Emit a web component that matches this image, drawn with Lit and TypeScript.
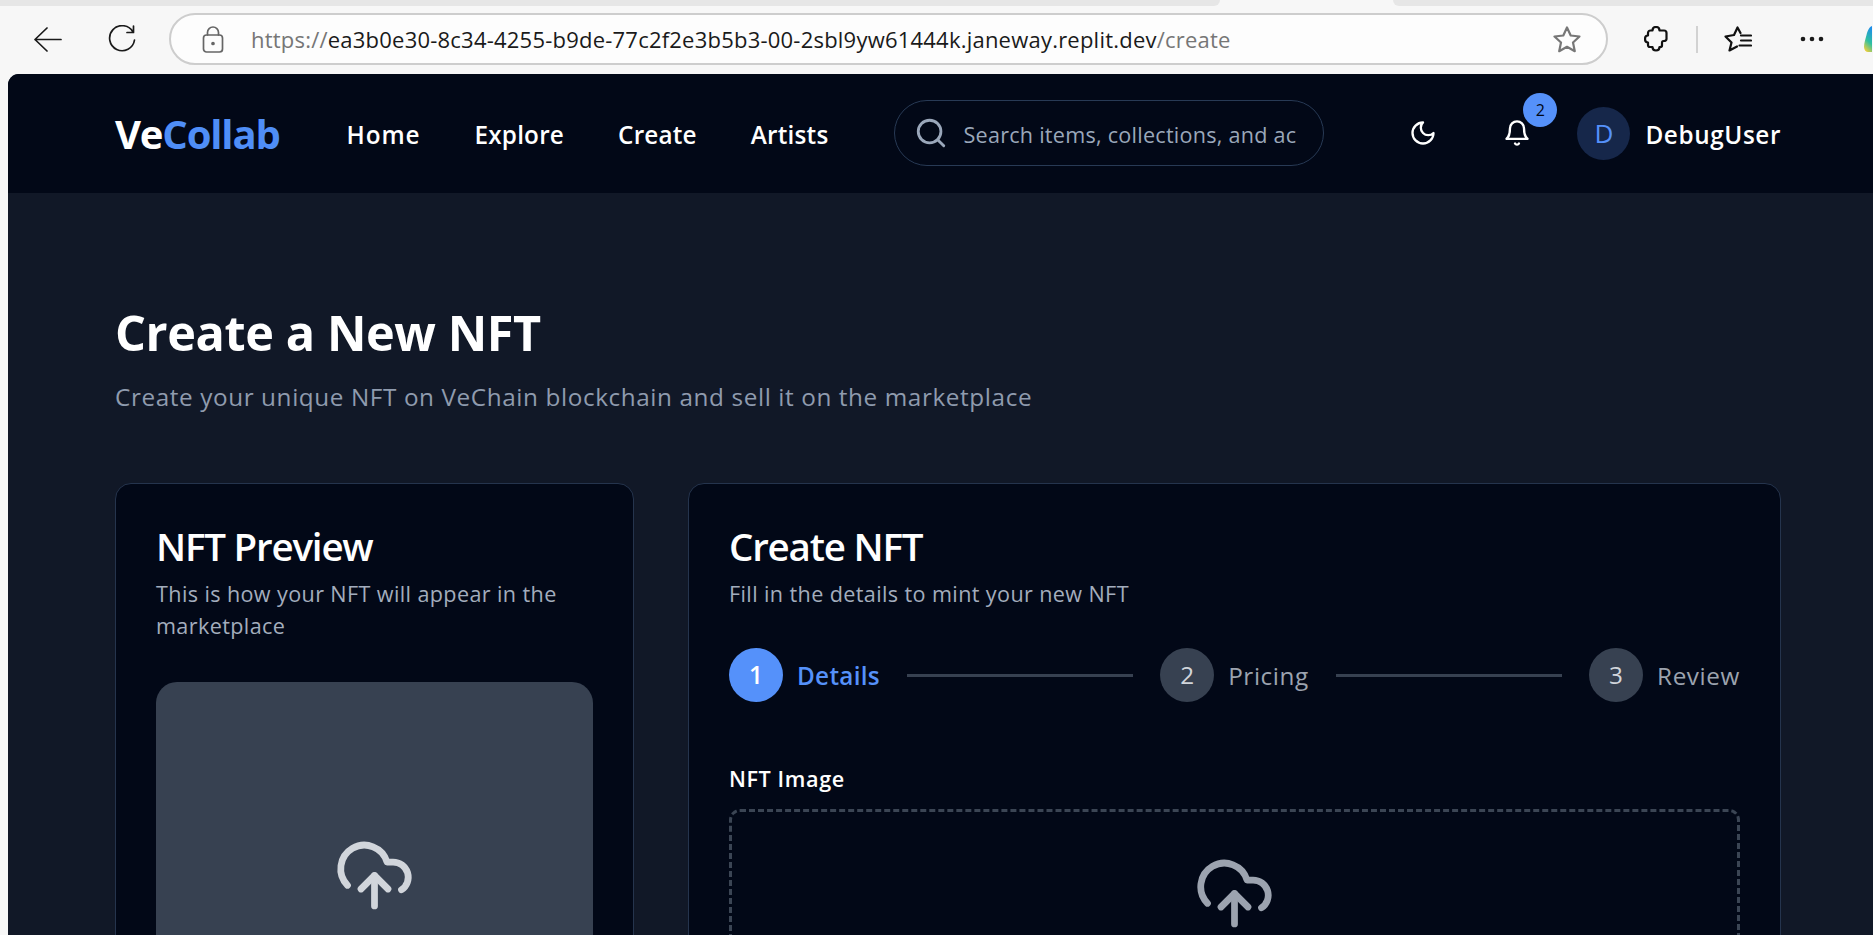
import { LitElement, css, html, svg } from "lit";
import { customElement } from "lit/decorators.js";

const cloudIcon = svg`
  <path d="M4 14.899A7 7 0 1 1 15.71 8h1.79a4.5 4.5 0 0 1 2.5 8.242" />
  <path d="M12 12v9" />
  <path d="m16 16-4-4-4 4" />
`;

@customElement("app-root")
export class AppRoot extends LitElement {
  static styles = css`
    :host {
      display: block;
      width: 1873px;
      height: 935px;
      overflow: hidden;
      background: #f7f7f7;
      font-family: "Open Sans", "Noto Sans", sans-serif;
    }

    svg {
      display: block;
      flex: none;
    }

    .tabs {
      display: flex;
      height: 6px;
    }

    .tab-left,
    .tab-right {
      background: #e6e6e6;
    }

    .tab-left {
      width: 1220px;
      border-bottom-right-radius: 6px;
    }

    .tab-right {
      flex: 1;
      margin-left: 173px;
      border-bottom-left-radius: 6px;
    }

    .toolbar {
      display: flex;
      align-items: center;
      height: 66px;
      padding: 0 0 2px 34px;
    }

    .thin {
      fill: none;
      stroke: #1a1a1a;
      stroke-width: 1.7;
      stroke-linecap: round;
      stroke-linejoin: round;
    }

    .bold {
      fill: none;
      stroke: #111;
      stroke-width: 2.2;
      stroke-linecap: round;
      stroke-linejoin: round;
    }

    .refresh {
      margin-left: 46px;
    }

    .pill {
      display: flex;
      flex: none;
      align-items: center;
      box-sizing: border-box;
      width: 1439px;
      height: 52px;
      margin-left: 33px;
      padding: 0 25px 0 31px;
      background: #fdfdfd;
      border: 2px solid #cdcdcd;
      border-radius: 26px;
    }

    .url {
      flex: 1;
      margin-left: 27px;
      font-size: 22px;
      letter-spacing: 0.22px;
      line-height: 30px;
      white-space: nowrap;
      color: #1a1a1a;
    }

    .url span {
      color: #767676;
    }

    .gray {
      stroke: #777;
    }

    .lock {
      stroke: #666;
    }

    .puzzle {
      margin-left: 36px;
    }

    .sep {
      flex: none;
      width: 2px;
      height: 27px;
      margin-left: 28px;
      background: #d2d2d2;
    }

    .fav {
      margin-left: 26px;
    }

    .dots {
      margin-left: 48px;
    }

    .copilot {
      margin-left: 40px;
    }

    .page {
      height: 861px;
      margin-left: 8px;
      overflow: hidden;
      background: #111827;
      border-top-left-radius: 11px;
      color: #fff;
    }

    .top {
      display: flex;
      align-items: center;
      box-sizing: border-box;
      height: 120px;
      padding: 0 92px 1px 107px;
      background: #020817;
      border-bottom: 1px solid #111827;
    }

    .logo {
      padding-top: 2px;
      font-size: 40px;
      font-weight: 700;
      letter-spacing: -1.15px;
      line-height: 54px;
      color: #fff;
    }

    .logo span {
      color: #4f8ef7;
    }

    nav {
      display: flex;
      gap: 54px;
      margin-left: 67px;
      padding-top: 2px;
      font-size: 24.3px;
      font-weight: 600;
      letter-spacing: 0.2px;
    }

    nav span:first-child {
      letter-spacing: 0.9px;
    }

    .search {
      display: flex;
      flex: none;
      align-items: center;
      box-sizing: border-box;
      width: 430px;
      height: 66px;
      margin-left: 66px;
      padding-left: 19px;
      border: 1px solid #283a55;
      border-radius: 33px;
      color: #9aa7ba;
    }

    .search svg,
    .moon svg,
    .bell svg {
      fill: none;
      stroke: currentColor;
      stroke-width: 2;
      stroke-linecap: round;
      stroke-linejoin: round;
    }

    .search span {
      margin-left: 15px;
      padding-top: 2px;
      font-size: 21.6px;
      letter-spacing: 0.25px;
      white-space: nowrap;
    }

    .moon {
      margin-left: auto;
    }

    .bell {
      position: relative;
      margin-left: 66px;
    }

    .badge {
      position: absolute;
      top: -26px;
      left: 20px;
      width: 34px;
      height: 34px;
      border-radius: 50%;
      background: #5591fa;
      color: #020817;
      font-size: 16px;
      line-height: 34px;
      text-align: center;
    }

    .avatar {
      flex: none;
      width: 53px;
      height: 53px;
      margin-left: 46px;
      border-radius: 50%;
      background: #16274a;
      color: #5591fa;
      font-size: 26px;
      font-weight: 500;
      line-height: 53px;
      text-align: center;
    }

    .name {
      margin-left: 15px;
      padding-top: 2px;
      font-size: 24.3px;
      font-weight: 600;
      letter-spacing: 0.6px;
    }

    main {
      padding: 108px 92px 0 107px;
    }

    h1 {
      margin: 0;
      font-size: 48.6px;
      font-weight: 700;
      letter-spacing: -0.4px;
      line-height: 60px;
    }

    .lead {
      margin: 19px 0 0;
      font-size: 24.3px;
      letter-spacing: 0.6px;
      line-height: 32px;
      color: #8f9bae;
    }

    .grid {
      display: grid;
      grid-template-columns: 519px 1fr;
      gap: 54px;
      margin-top: 70px;
    }

    .card {
      box-sizing: border-box;
      height: 700px;
      padding: 35px 40px 0;
      background: #020817;
      border: 1px solid #25344d;
      border-radius: 16px;
    }

    h2 {
      margin: 0;
      font-size: 38.5px;
      font-weight: 600;
      letter-spacing: -1.2px;
      line-height: 54px;
    }

    .desc {
      margin: 5px 0 0;
      font-size: 21.6px;
      letter-spacing: 0.38px;
      line-height: 32px;
      color: #a3adbd;
    }

    .preview {
      box-sizing: border-box;
      height: 436px;
      margin-top: 40px;
      padding-top: 153px;
      background: #374151;
      border-radius: 21px;
      color: #d1d5db;
    }

    .cloud {
      margin: 0 auto;
      fill: none;
      stroke: currentColor;
      stroke-width: 2;
      stroke-linecap: round;
      stroke-linejoin: round;
    }

    .steps {
      display: flex;
      align-items: center;
      margin-top: 38px;
    }

    .step {
      display: flex;
      align-items: center;
      gap: 14px;
      font-size: 24.3px;
      letter-spacing: 0.6px;
      color: #9ca3af;
    }

    .num {
      width: 54px;
      height: 54px;
      border-radius: 50%;
      background: #374151;
      color: #d1d5db;
      line-height: 54px;
      letter-spacing: 0;
      text-align: center;
    }

    .step.on {
      font-weight: 600;
      letter-spacing: 0.3px;
      color: #5591fa;
    }

    .step.on .num {
      background: #5591fa;
      color: #fff;
    }

    .line {
      flex: 1;
      height: 3px;
      margin: 0 27px;
      background: #374151;
    }

    label {
      display: block;
      margin-top: 61px;
      font-size: 21.6px;
      font-weight: 600;
      letter-spacing: 0.6px;
      line-height: 32px;
    }

    .drop {
      box-sizing: border-box;
      height: 300px;
      margin-top: 14px;
      padding-top: 41px;
      border: 3px dashed #3b4554;
      border-radius: 11px;
      color: #9ca3af;
    }
  `;

  private step(n: number, text: string, on = false) {
    return html`
      <div class="step ${on ? "on" : ""}">
        <div class="num">${n}</div>
        <span>${text}</span>
      </div>
    `;
  }

  render() {
    return html`
      <div class="tabs"><div class="tab-left"></div><div class="tab-right"></div></div>
      <div class="toolbar">
        <svg class="thin" width="28" height="25" viewBox="0 0 28 25">
          <path d="M27 12.5H1M13 1 1 12.5 13 24" />
        </svg>
        <svg class="thin refresh" width="28" height="28" viewBox="0 0 28 28">
          <path d="M25 7A12.5 12.5 0 1 0 26.5 15M25.5 1V7.5H19" />
        </svg>
        <div class="pill">
          <svg class="thin lock" width="22" height="27" viewBox="0 0 22 27">
            <rect x="1.5" y="9" width="19" height="17" rx="3" />
            <path d="M5.5 9V6.5a5.5 5.5 0 0 1 11 0V9" />
            <circle cx="11" cy="17.5" r="1" fill="#666" />
          </svg>
          <div class="url">
            <span>https://</span>ea3b0e30-8c34-4255-b9de-77c2f2e3b5b3-00-2sbl9yw61444k.janeway.replit.dev<span>/create</span>
          </div>
          <svg class="bold gray" width="28" height="27" viewBox="0 0 28 27">
            <path d="M14 1.5l3.7 8 8.8 1-6.5 6 1.8 8.7-7.8-4.4-7.8 4.4L8 16.5l-6.5-6 8.8-1z" />
          </svg>
        </div>
        <svg class="bold puzzle" width="24" height="26" viewBox="0 0 24 26">
          <path d="M8.5 4.5C8.5 2.5 10 1 12 1s3.500 1.500 3.500 3.500H20c1.500 0 2.500 1 2.500 2.500v6c0 1.500-1.500 2-3 2-1.200 0-1.500 1-1.500 2v2.500c0 1-1 1.500-2 1.500h-.5c0 2-1.500 3.500-3.500 3.500s-3.500-1.500-3.500-3.500H6c-1.500 0-2-1-2-2v-2.500c-2 0-3-1.500-3-3.500s1-3.500 3-3.500V7c0-1.500 1-2.500 2.500-2.500z" />
        </svg>
        <div class="sep"></div>
        <svg class="bold fav" width="28" height="26" viewBox="0 0 28 26">
          <path d="M16.500 7 13.500 1.500 10 9l-8.500 1.500 6 6-2 8 7.500-4M17 9.500h10M17 14.500h10M15.500 19.500H27" />
        </svg>
        <svg class="dots" width="24" height="6" viewBox="0 0 24 6" fill="#1a1a1a">
          <circle cx="3" cy="3" r="2.300" /><circle cx="12" cy="3" r="2.300" /><circle cx="21" cy="3" r="2.300" />
        </svg>
        <svg class="copilot" width="8" height="26" viewBox="0 0 8 26">
          <defs>
            <linearGradient id="cp" x1="0.6" y1="0" x2="0.3" y2="1">
              <stop offset="0" stop-color="#1f8fe8" />
              <stop offset="0.55" stop-color="#2fc0a0" />
              <stop offset="1" stop-color="#f2cf3a" />
            </linearGradient>
          </defs>
          <path d="M8 0C5 1 3.500 5 2.500 9 1.500 13 0 17 0 21c0 3 2 5 4 5h4z" fill="url(#cp)" />
        </svg>
      </div>
      <div class="page">
        <header class="top">
          <div class="logo">Ve<span>Collab</span></div>
          <nav>
            <span>Home</span><span>Explore</span><span>Create</span><span>Artists</span>
          </nav>
          <div class="search">
            <svg width="34" height="34" viewBox="0 0 24 24">
              <circle cx="11" cy="11" r="8" /><path d="m21 21-4.300-4.300" />
            </svg>
            <span>Search items, collections, and ac</span>
          </div>
          <div class="moon">
            <svg width="28" height="28" viewBox="0 0 24 24">
              <path d="M12 3a6 6 0 0 0 9 9 9 9 0 1 1-9-9Z" />
            </svg>
          </div>
          <div class="bell">
            <svg width="28" height="28" viewBox="0 0 24 24">
              <path d="M6 8a6 6 0 0 1 12 0c0 7 3 9 3 9H3s3-2 3-9" />
              <path d="M10.300 21a1.940 1.940 0 0 0 3.400 0" />
            </svg>
            <div class="badge">2</div>
          </div>
          <div class="avatar">D</div>
          <div class="name">DebugUser</div>
        </header>
        <main>
          <h1>Create a New NFT</h1>
          <p class="lead">Create your unique NFT on VeChain blockchain and sell it on the marketplace</p>
          <div class="grid">
            <section class="card">
              <h2>NFT Preview</h2>
              <p class="desc">This is how your NFT will appear in the marketplace</p>
              <div class="preview">
                <svg class="cloud" width="81" height="81" viewBox="0 0 24 24">${cloudIcon}</svg>
              </div>
            </section>
            <section class="card">
              <h2>Create NFT</h2>
              <p class="desc">Fill in the details to mint your new NFT</p>
              <div class="steps">
                ${this.step(1, "Details", true)}
                <div class="line"></div>
                ${this.step(2, "Pricing")}
                <div class="line"></div>
                ${this.step(3, "Review")}
              </div>
              <label>NFT Image</label>
              <div class="drop">
                <svg class="cloud" width="81" height="81" viewBox="0 0 24 24">${cloudIcon}</svg>
              </div>
            </section>
          </div>
        </main>
      </div>
    `;
  }
}
